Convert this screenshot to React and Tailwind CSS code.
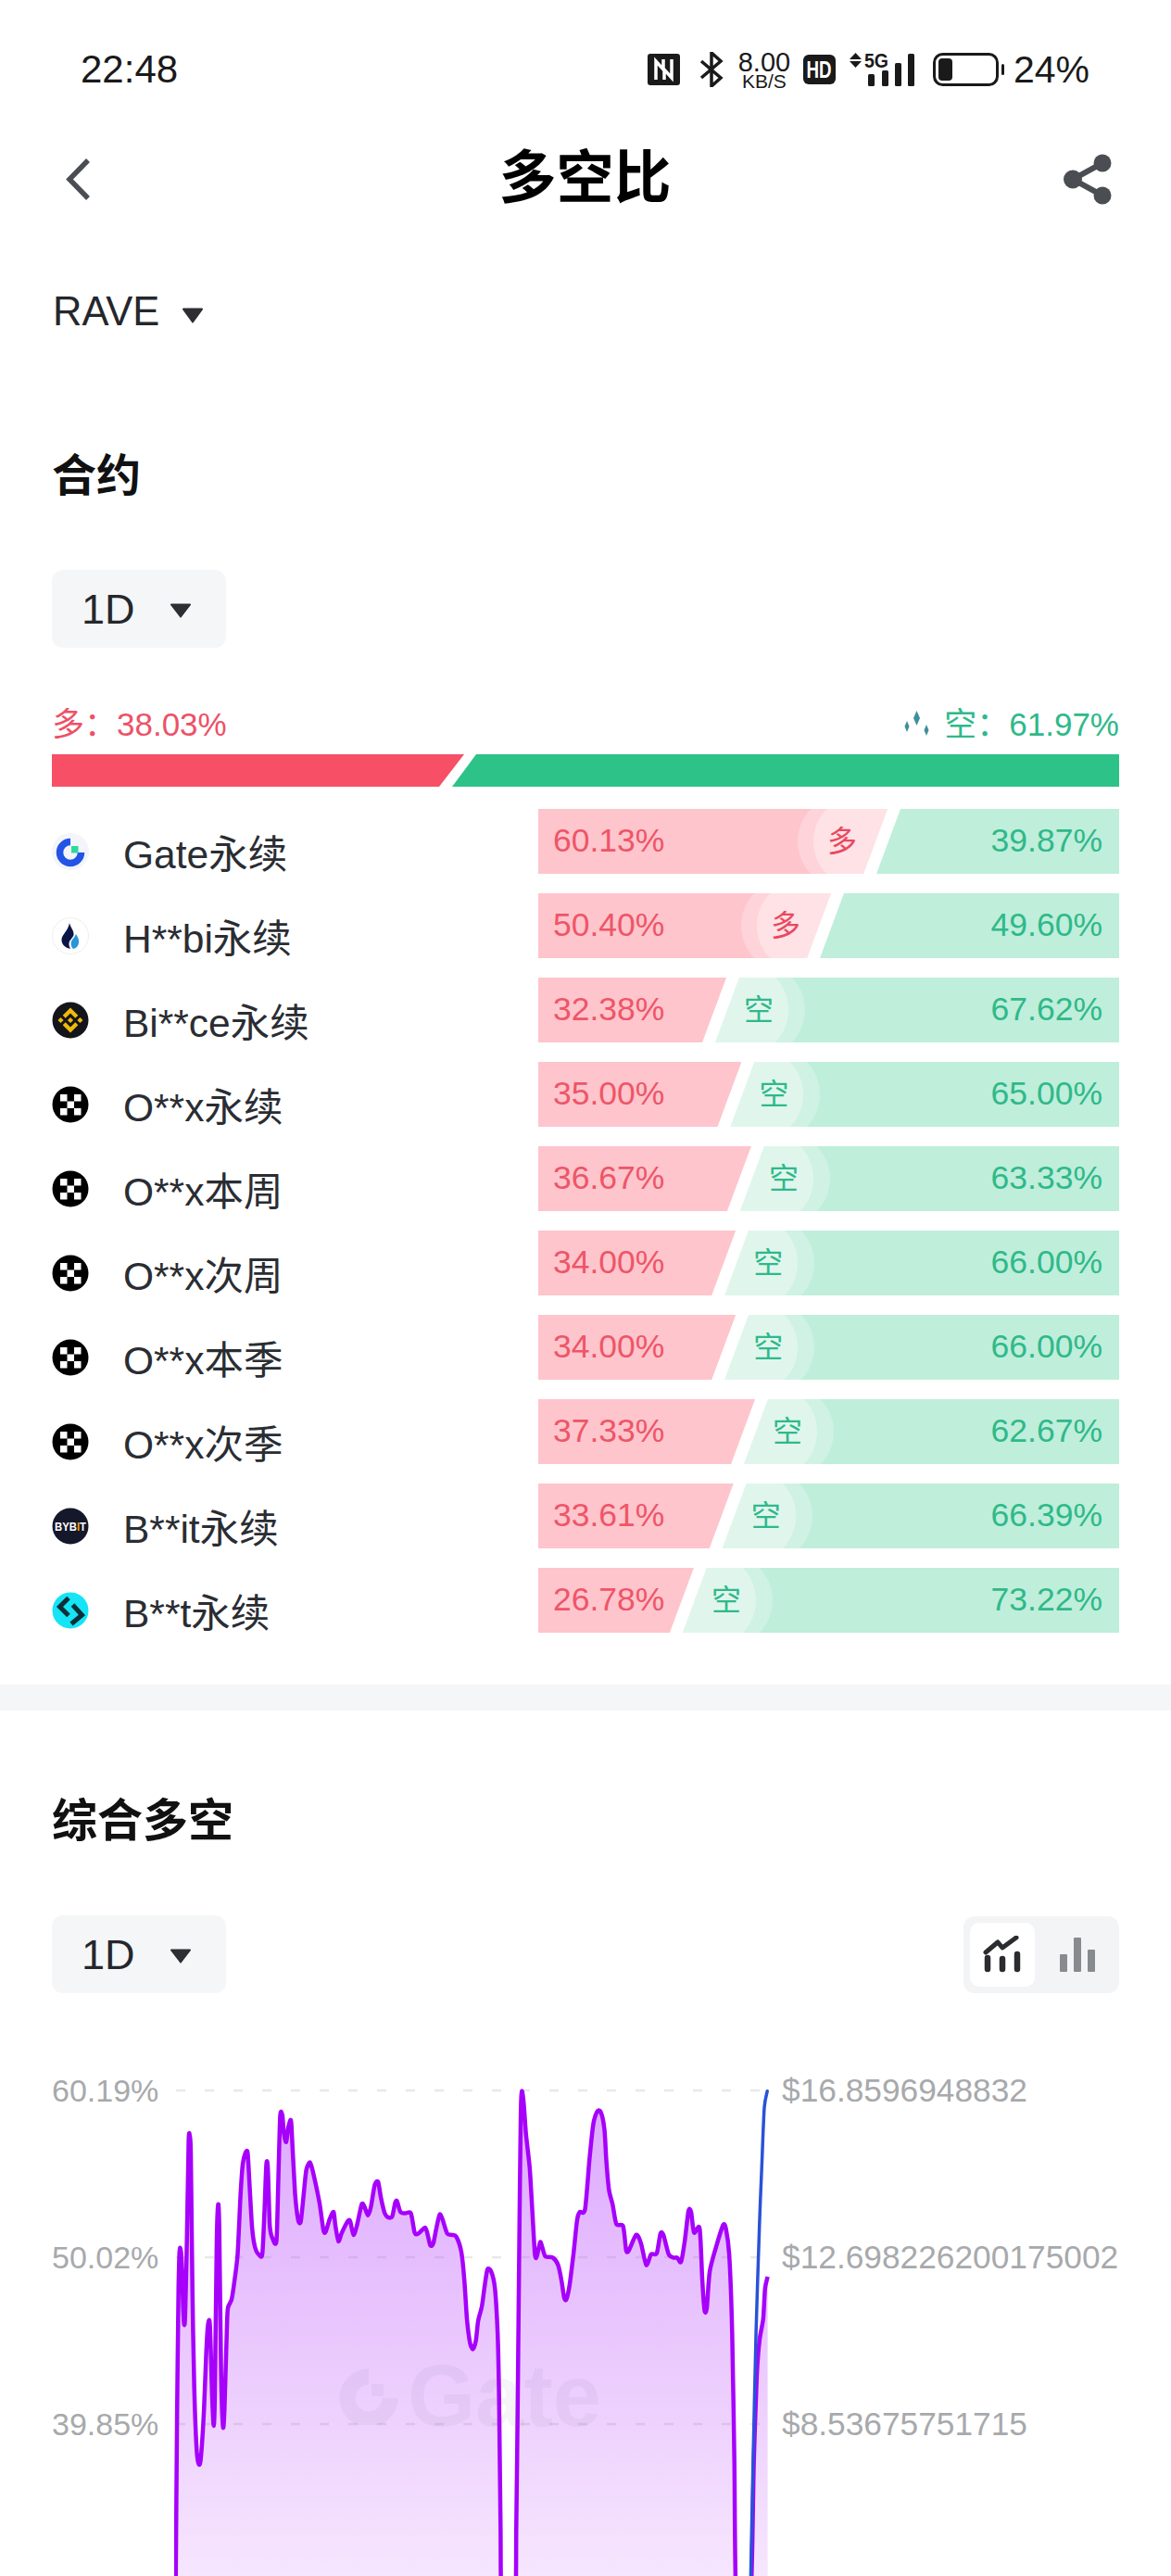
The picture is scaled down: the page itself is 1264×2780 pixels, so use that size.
import React from "react";

const RED_WIDTH = 627;

const rows = [
  { logo: "gate", name: "Gate永续", long: 60.13, short: 39.87, side: "多" },
  { logo: "huobi", name: "H**bi永续", long: 50.4, short: 49.6, side: "多" },
  { logo: "binance", name: "Bi**ce永续", long: 32.38, short: 67.62, side: "空" },
  { logo: "okx", name: "O**x永续", long: 35.0, short: 65.0, side: "空" },
  { logo: "okx", name: "O**x本周", long: 36.67, short: 63.33, side: "空" },
  { logo: "okx", name: "O**x次周", long: 34.0, short: 66.0, side: "空" },
  { logo: "okx", name: "O**x本季", long: 34.0, short: 66.0, side: "空" },
  { logo: "okx", name: "O**x次季", long: 37.33, short: 62.67, side: "空" },
  { logo: "bybit", name: "B**it永续", long: 33.61, short: 66.39, side: "空" },
  { logo: "bitget", name: "B**t永续", long: 26.78, short: 73.22, side: "空" },
];

// Chart points, measured on the reference: x is page x * 2.48, y is (page y - 2050) * 2.148
const purpleLine = [
  [470, 1640], [474, 1200], [478, 900], [481, 808], [486, 830], [491, 960], [495, 975], [500, 800], [505, 560],
  [508, 545], [511, 590], [515, 900], [520, 1130], [527, 1280], [533, 1308], [538, 1290], [546, 1180], [552, 1050],
  [557, 982], [562, 985], [568, 1150], [572, 1218], [575, 1150], [580, 800], [584, 705], [587, 760], [592, 1100],
  [597, 1220], [601, 1180], [607, 1000], [610, 945], [620, 925], [628, 880], [636, 820], [644, 680], [650, 610],
  [657, 585], [663, 585], [668, 660], [675, 760], [683, 805], [692, 820], [702, 820], [708, 720], [713, 612],
  [717, 620], [722, 750], [728, 780], [740, 790], [745, 650], [750, 500], [756, 498], [760, 540], [766, 560],
  [772, 525], [779, 510], [783, 570], [790, 680], [798, 740], [805, 745], [812, 690], [820, 625], [830, 607],
  [838, 630], [855, 700], [866, 765], [872, 768], [882, 740], [893, 722], [898, 755], [906, 790], [915, 770],
  [932, 742], [938, 745], [946, 775], [955, 755], [968, 705], [975, 708], [985, 730], [993, 710], [1003, 660],
  [1012, 652], [1020, 690], [1030, 725], [1040, 735], [1050, 732], [1058, 700], [1063, 697], [1072, 722], [1085, 725],
  [1100, 725], [1110, 770], [1120, 772], [1138, 758], [1145, 775], [1152, 800], [1160, 795], [1168, 760], [1177, 728],
  [1185, 740], [1197, 772], [1210, 775], [1222, 780], [1235, 815], [1243, 880], [1250, 970], [1258, 1025], [1266, 1040],
  [1274, 1020], [1280, 975], [1290, 940], [1298, 890], [1305, 855], [1315, 860], [1325, 900], [1332, 1000], [1336, 1150],
  [1340, 1450], [1344, 1640], [1378, 1640], [1382, 1450], [1386, 1150], [1390, 800], [1394, 500], [1397, 442],
  [1402, 470], [1408, 540], [1418, 620], [1425, 720], [1432, 820], [1437, 825], [1446, 792], [1452, 805], [1460, 825],
  [1480, 828], [1494, 845], [1503, 880], [1510, 920], [1516, 925], [1525, 890], [1535, 820], [1545, 740], [1552, 722],
  [1566, 716], [1578, 600], [1588, 520], [1598, 490], [1608, 490], [1618, 530], [1623, 600], [1630, 670], [1640, 705],
  [1650, 750], [1668, 755], [1676, 810], [1683, 812], [1703, 775], [1716, 795], [1730, 845], [1743, 820], [1758, 818],
  [1768, 772], [1776, 775], [1790, 820], [1803, 828], [1813, 828], [1823, 838], [1833, 790], [1843, 720], [1850, 722],
  [1858, 770], [1873, 760], [1880, 880], [1886, 950], [1892, 945], [1900, 860], [1918, 800], [1936, 752], [1943, 760],
  [1952, 820], [1960, 1000], [1966, 1300], [1972, 1640], [2008, 1640], [2018, 1300], [2026, 1100], [2033, 1020],
  [2043, 970], [2048, 900], [2055, 872],
];

const blueLine = [
  [2008, 1640], [2016, 1300], [2024, 1000], [2033, 750], [2040, 600], [2046, 480], [2054, 442],
];

const toPage = ([x, y]) => [x / 2.48, 2050 + y / 2.148];

// Catmull-Rom through the points so the line keeps its soft corners
const smoothPath = (points) => {
  const p = points.map(toPage);
  let d = `M${p[0][0].toFixed(1)} ${p[0][1].toFixed(1)}`;
  for (let i = 0; i < p.length - 1; i++) {
    const a = p[i - 1] || p[i];
    const b = p[i];
    const c = p[i + 1];
    const e = p[i + 2] || c;
    const c1 = [b[0] + (c[0] - a[0]) / 8, b[1] + (c[1] - a[1]) / 8];
    const c2 = [c[0] - (e[0] - b[0]) / 8, c[1] - (e[1] - b[1]) / 8];
    d += `C${c1[0].toFixed(1)} ${c1[1].toFixed(1)} ${c2[0].toFixed(1)} ${c2[1].toFixed(1)} ${c[0].toFixed(1)} ${c[1].toFixed(1)}`;
  }
  return d;
};

const purplePath = smoothPath(purpleLine);
const bluePath = smoothPath(blueLine);
const lastX = (purpleLine[purpleLine.length - 1][0] / 2.48).toFixed(1);
const firstX = (purpleLine[0][0] / 2.48).toFixed(1);
const areaPath = `${purplePath}L${lastX} 2890L${firstX} 2890Z`;

function Caret({ className }) {
  return (
    <svg viewBox="0 0 22 16" className={className} preserveAspectRatio="none">
      <path d="M1 0.5h20a1 1 0 0 1 .8 1.6l-10 13a1 1 0 0 1-1.6 0l-10-13A1 1 0 0 1 1 .5z" fill="#2c2e33" />
    </svg>
  );
}

function Logo({ type }) {
  return (
    <svg viewBox="0 0 40 40" className="w-[40px] h-[40px] shrink-0">
      {type === "gate" && (
        <>
          <circle cx="20" cy="20" r="20" fill="#f4f5fa" />
          <path d="M20 9.5A11.5 11.5 0 1 0 31.5 21" fill="none" stroke="#2354e6" strokeWidth="7.5" />
          <rect x="21" y="14" width="7.5" height="7.5" fill="#2ed9a0" />
        </>
      )}
      {type === "huobi" && (
        <>
          <circle cx="20" cy="20" r="19.5" fill="#fff" stroke="#eeeeee" />
          <path d="M19 6c1 5 5 8 4.500 13-.5 3-4.500 5-5 9-.2 2.500.5 4.500 1.500 6-5-1-9-4-9.500-9-.5-6 7-10 8.500-19z" fill="#0b1647" />
          <path d="M26 18c2 3 3.500 6 3 9.500-.5 3.500-3 6-6 6.500-2-2-3-5-2-8 1-3 4-4.500 5-8z" fill="#2a96d8" />
        </>
      )}
      {type === "binance" && (
        <>
          <circle cx="20" cy="20" r="19.500" fill="#14151a" />
          <g transform="translate(6.500 6.500) scale(0.2132)" fill="#f0b90b">
            <path d="M38.73 53.2l24.59-24.58 24.6 24.6 14.3-14.31L63.32 0 24.43 38.9zM0 63.31l14.3-14.31 14.31 14.31-14.31 14.3zM38.73 73.41l24.59 24.59 24.6-24.6 14.31 14.29-38.9 38.91-38.91-38.88zM98 63.31l14.3-14.31 14.31 14.3-14.31 14.32zM77.83 63.3L63.32 48.78 52.59 59.51l-1.24 1.23-2.54 2.54 14.51 14.5 14.51-14.47z" />
          </g>
        </>
      )}
      {type === "okx" && (
        <>
          <circle cx="20" cy="20" r="19.500" fill="#000" />
          {[[9, 9], [24, 9], [16.5, 16.5], [9, 24], [24, 24]].map(([x, y]) => (
            <rect key={`${x}-${y}`} x={x} y={y} width="7.500" height="7.500" fill="#fff" />
          ))}
        </>
      )}
      {type === "bybit" && (
        <>
          <circle cx="20" cy="20" r="19.500" fill="#15172a" />
          <text x="3" y="24.500" fontSize="12.500" fontWeight="700" fill="#fff" textLength="34" lengthAdjust="spacingAndGlyphs">
            BYB<tspan fill="#f7a600">I</tspan>T
          </text>
        </>
      )}
      {type === "bitget" && (
        <>
          <circle cx="20" cy="20" r="19.500" fill="#14e4f5" />
          <path d="M18 6.500L8.500 16 18 25.500" fill="none" stroke="#0e2f38" strokeWidth="5" />
          <path d="M22.500 14L32.500 25 21 34.500" fill="none" stroke="#0e2f38" strokeWidth="5" />
        </>
      )}
    </svg>
  );
}

function RatioBar({ long, short, side }) {
  return (
    <div className="flex h-[70px] w-[627px] text-[35.500px] leading-none">
      <div
        className="relative h-full shrink-0 overflow-hidden bg-[#fec5cc] text-[#ee5568] flex items-center pl-[16px] [clip-path:polygon(0_0,100%_0,calc(100%-26px)_100%,0_100%)]"
        style={{ width: (long / 100) * RED_WIDTH }}
      >
        {long.toFixed(2)}%
        {side === "多" && (
          <>
            <div className="absolute top-[-15px] right-[-43px] h-[100px] w-[140px] rounded-l-full bg-white/25" />
            <div className="absolute top-[-15px] right-[-43px] h-[100px] w-[123px] rounded-l-full bg-white/35" />
            <span className="absolute right-[33px] top-[19px] w-[32px] text-[32px] text-[#e9485f]">多</span>
          </>
        )}
      </div>
      <div className="relative ml-[-12px] h-full flex-1 overflow-hidden bg-[#bfeedb] text-[#2fb98a] flex items-center justify-end pr-[18px] [clip-path:polygon(26px_0,100%_0,100%_100%,0_100%)]">
        {side === "空" && (
          <>
            <div className="absolute top-[-15px] left-[-40px] h-[100px] w-[137px] rounded-r-full bg-white/25" />
            <div className="absolute top-[-15px] left-[-40px] h-[100px] w-[119px] rounded-r-full bg-white/35" />
            <span className="absolute left-[31px] top-[19px] w-[32px] text-[32px]">空</span>
          </>
        )}
        {short.toFixed(2)}%
      </div>
    </div>
  );
}

function PeriodSelect() {
  return (
    <div className="flex h-[84px] w-[188px] items-center rounded-[12px] bg-[#f5f6f7] pl-[32px] text-[45px] leading-none text-[#25272c]">
      <span>1D</span>
      <Caret className="ml-[38px] mt-[4px] h-[16px] w-[22px]" />
    </div>
  );
}

function StatusBar() {
  return (
    <div className="flex h-[150px] items-center justify-between pl-[87px] pr-[88px] text-[#1a1a1a]">
      <span className="text-[42px] leading-none">22:48</span>
      <div className="flex items-center">
        <svg viewBox="0 0 35 34" className="h-[34px] w-[35px]">
          <rect width="35" height="34" rx="3" fill="#1a1a1a" />
          <path d="M9 28V8l8 9V6M26 6v20l-8-9v11" fill="none" stroke="#fff" strokeWidth="3.500" />
        </svg>
        <svg viewBox="0 0 26 38" className="ml-[21px] h-[38px] w-[26px]">
          <path d="M2 10l21 18-10 9V1l10 9L2 28" fill="none" stroke="#1a1a1a" strokeWidth="3.500" />
        </svg>
        <div className="ml-[15px] flex w-[58px] flex-col items-center leading-none">
          <span className="text-[29px] leading-[24px]">8.00</span>
          <span className="mt-[1px] text-[21px] leading-[16px]">KB/S</span>
        </div>
        <div className="ml-[13px] flex h-[32px] w-[35px] items-center justify-center rounded-[6px] bg-[#1a1a1a] text-[25px] font-bold leading-none text-white">
          <span className="inline-block scale-x-[.75]">HD</span>
        </div>
        <svg viewBox="0 0 70 37" className="ml-[15px] h-[37px] w-[70px]">
          <path d="M0 7L6.500 0 13 7zM0 9h13L6.500 16z" fill="#1a1a1a" />
          <text x="16" y="16" fontSize="22" fontWeight="700" fill="#1a1a1a" textLength="26" lengthAdjust="spacingAndGlyphs">
            5G
          </text>
          <rect x="20" y="23" width="7" height="13" rx="1.500" fill="#1a1a1a" />
          <rect x="35" y="19" width="7" height="17" rx="1.500" fill="#1a1a1a" />
          <rect x="49" y="11" width="7" height="25" rx="1.500" fill="#1a1a1a" />
          <rect x="63" y="1" width="7" height="35" rx="1.500" fill="#1a1a1a" />
        </svg>
        <svg viewBox="0 0 77 36" className="ml-[20px] h-[36px] w-[77px]">
          <rect x="1.500" y="1.500" width="68" height="33" rx="9" fill="none" stroke="#1a1a1a" strokeWidth="3" />
          <rect x="6" y="6" width="15" height="24" rx="4" fill="#1a1a1a" />
          <rect x="74" y="12" width="3" height="12" rx="1.500" fill="#1a1a1a" />
        </svg>
        <span className="ml-[10px] text-[41px] leading-none">24%</span>
      </div>
    </div>
  );
}

function Chart() {
  return (
    <div className="mt-[15px] flex text-[34px] leading-none text-[#a7a9ac]">
      <div className="w-[188px] shrink-0 pl-[56px]">
        {["60.19%", "50.02%", "39.85%", "29.68%"].map((label) => (
          <div key={label} className="flex h-[180px] items-center">
            {label}
          </div>
        ))}
      </div>
      <div className="relative h-[720px] w-[656px] shrink-0">
        <svg viewBox="188 2165 656 720" className="h-[720px] w-[656px]">
          <defs>
            <linearGradient id="longShortFill" gradientUnits="userSpaceOnUse" x1="0" y1="2240" x2="0" y2="2780">
              <stop offset="0" stopColor="#dca6ff" />
              <stop offset="0.5" stopColor="#e9c6fd" />
              <stop offset="1" stopColor="#f6e6fe" />
            </linearGradient>
          </defs>
          <path d={areaPath} fill="url(#longShortFill)" />
          {[2255, 2435, 2615].map((y) => (
            <line key={y} x1="190" x2="830" y1={y} y2={y} stroke="#8a8a8a" strokeOpacity="0.2" strokeWidth="2.500" strokeDasharray="10 21" />
          ))}
          <path d={purplePath} fill="none" stroke="#a600fb" strokeWidth="4.500" strokeLinejoin="round" />
          <path d={bluePath} fill="none" stroke="#2a52d8" strokeWidth="3.500" strokeLinecap="round" />
        </svg>
        {/* watermark */}
        <div className="absolute left-[177px] top-[373px] flex items-center text-[#6f6a90]/[0.07]">
          <svg viewBox="0 0 66 62" className="h-[62px] w-[66px]">
            <path d="M33 10A23 23 0 1 0 56 33" fill="none" stroke="currentColor" strokeWidth="17" />
            <rect x="36" y="18" width="13" height="13" fill="currentColor" />
          </svg>
          <span className="ml-[9px] text-[94px] font-bold leading-none">Gate</span>
        </div>
      </div>
      <div className="flex-1 whitespace-nowrap">
        {["$16.8596948832", "$12.698226200175002", "$8.53675751715", "$4.37528881680"].map((label) => (
          <div key={label} className="flex h-[180px] items-center text-[35.300px]">
            {label}
          </div>
        ))}
      </div>
    </div>
  );
}

export default function App() {
  return (
    <div className="h-[2780px] w-[1264px] overflow-hidden bg-white font-['Liberation_Sans','Noto_Sans_CJK_SC',sans-serif]">
      <StatusBar />

      <div className="grid h-[86px] grid-cols-[1fr_auto_1fr] items-center pl-[71px] pr-[64px]">
        <svg viewBox="0 0 26 45" className="h-[45px] w-[26px]">
          <path d="M24 2L4 22.500 24 43" fill="none" stroke="#4a4d52" strokeWidth="5.500" />
        </svg>
        <h1 className="ml-[-8px] text-[62px] font-bold leading-none text-black">多空比</h1>
        <svg viewBox="0 0 52 55" className="h-[55px] w-[52px] justify-self-end">
          <path d="M42 10L10 27.500 42 45" fill="none" stroke="#4a4d52" strokeWidth="6" />
          <circle cx="42" cy="10" r="9.500" fill="#4a4d52" />
          <circle cx="10" cy="27.500" r="10" fill="#4a4d52" />
          <circle cx="42" cy="45" r="9.500" fill="#4a4d52" />
        </svg>
      </div>

      <div className="mt-[71px] flex h-[60px] items-center pl-[57px] text-[43.500px] leading-none text-[#25272c]">
        <span>RAVE</span>
        <Caret className="ml-[25px] mt-[6px] h-[17px] w-[22px]" />
      </div>

      <div className="px-[56px]">
        <h2 className="mt-[117px] h-[60px] text-[48px] font-bold leading-[60px] text-[#111]">合约</h2>
        <div className="mt-[71px]">
          <PeriodSelect />
        </div>

        <div className="mt-[62px] flex h-[40px] items-center justify-between text-[35px] leading-none">
          <span className="text-[#ec5268]">多：38.03%</span>
          <div className="flex items-center text-[#2fb98a]">
            <svg viewBox="0 0 30 28" className="mr-[14px] h-[28px] w-[30px]">
              <path d="M14.500 0l3.500 8-3.500 8-3.500-8zM4 11l2.500 6L4 23l-2.500-6zM25 15l2.500 6-2.500 6-2.500-6z" fill="#3f8f9c" />
            </svg>
            <span>空：61.97%</span>
          </div>
        </div>

        <div className="mt-[13px] flex h-[35px]">
          <div className="h-full w-[445px] shrink-0 bg-[#f74f65] [clip-path:polygon(0_0,100%_0,calc(100%-27px)_100%,0_100%)]" />
          <div className="ml-[-13px] h-full flex-1 bg-[#2dc287] [clip-path:polygon(26px_0,100%_0,100%_100%,0_100%)]" />
        </div>

        <div className="mt-[24px] flex flex-col gap-[21px]">
          {rows.map((row) => (
            <div key={row.name} className="flex h-[70px]">
              <div className="flex w-[525px] items-center pt-[22px]">
                <Logo type={row.logo} />
                <span className="ml-[37px] mt-[8px] text-[42.500px] leading-none text-[#2a2d33]">{row.name}</span>
              </div>
              <RatioBar long={row.long} short={row.short} side={row.side} />
            </div>
          ))}
        </div>
      </div>

      <div className="mt-[56px] h-[28px] bg-[#f5f6f7]" />

      <div className="px-[56px]">
        <h2 className="mt-[89px] h-[60px] text-[49px] font-bold leading-[60px] text-[#111]">综合多空</h2>
        <div className="mt-[72px] flex items-center justify-between">
          <PeriodSelect />
          <div className="flex h-[83px] w-[168px] items-center rounded-[12px] bg-[#f2f4f5] p-[7px]">
            <div className="flex h-[69px] w-[70px] items-center justify-center rounded-[10px] bg-white">
              <svg viewBox="0 0 42 40" className="h-[40px] w-[42px]">
                <path d="M3 18L16 7l5 6L36 2" fill="none" stroke="#2a2c30" strokeWidth="5" strokeLinecap="round" strokeLinejoin="round" />
                <path d="M5 24v12M21 25v11M37 20v16" fill="none" stroke="#2a2c30" strokeWidth="6.500" strokeLinecap="round" />
              </svg>
            </div>
            <svg viewBox="0 0 42 40" className="ml-[25px] h-[40px] w-[42px]">
              <rect x="2" y="20" width="8" height="19" rx="1" fill="#888b8d" />
              <rect x="17" y="2" width="8" height="37" rx="1" fill="#888b8d" />
              <rect x="32" y="15" width="8" height="24" rx="1" fill="#888b8d" />
            </svg>
          </div>
        </div>
      </div>

      <Chart />
    </div>
  );
}
